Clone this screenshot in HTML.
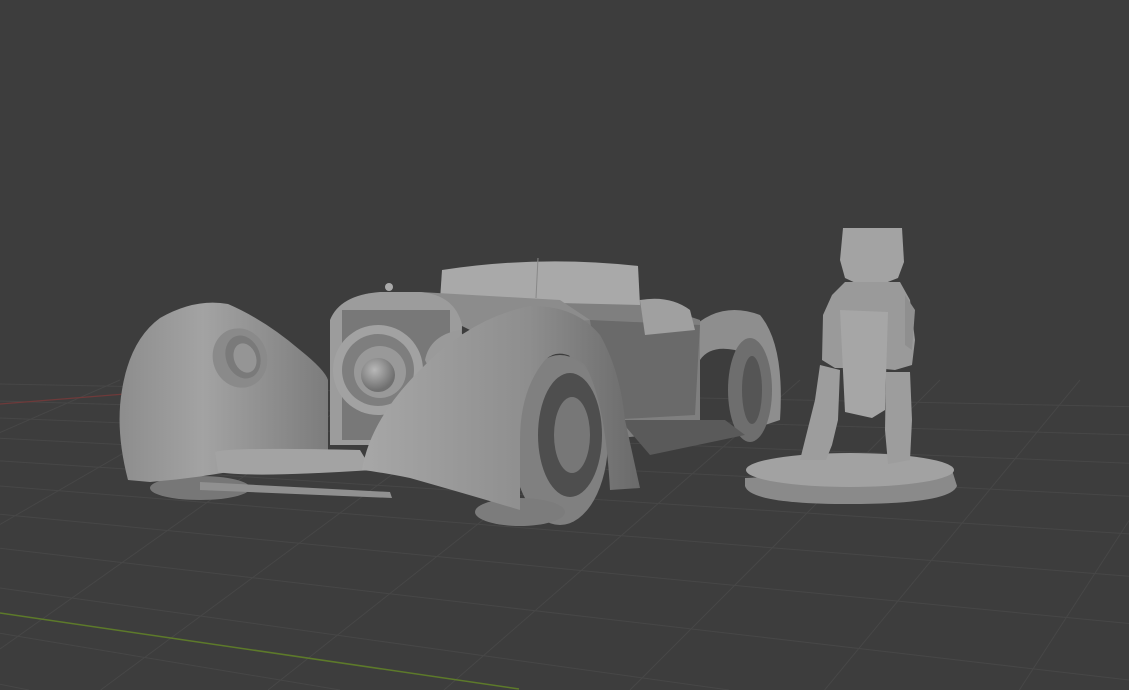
<!DOCTYPE html>
<html><head><meta charset="utf-8"><style>
html,body{margin:0;padding:0;background:#3d3d3d;overflow:hidden;width:1129px;height:690px}
svg{display:block}
</style></head><body>
<svg width="1129" height="690" viewBox="0 0 1129 690" xmlns="http://www.w3.org/2000/svg">
<defs>
<linearGradient id="fl" x1="0" y1="0" x2="1" y2="0"><stop offset="0" stop-color="#8d8d8d"/><stop offset="0.4" stop-color="#a3a3a3"/><stop offset="1" stop-color="#7c7c7c"/></linearGradient>
<linearGradient id="fr" x1="0" y1="0" x2="1" y2="0"><stop offset="0" stop-color="#a7a7a7"/><stop offset="0.6" stop-color="#8e8e8e"/><stop offset="1" stop-color="#6a6a6a"/></linearGradient>
<radialGradient id="hl" cx="0.4" cy="0.35" r="0.6"><stop offset="0" stop-color="#b8b8b8"/><stop offset="1" stop-color="#707070"/></radialGradient>
</defs>
<rect width="1129" height="690" fill="#3d3d3d"/>
<g stroke="#474747" stroke-width="1" fill="none">
<line x1="0" y1="384" x2="1129" y2="406.6"/>
<line x1="0" y1="401" x2="1129" y2="434.9"/>
<line x1="0" y1="418" x2="1129" y2="463.2"/>
<line x1="0" y1="438.3" x2="1129" y2="496.2"/>
<line x1="0" y1="460.9" x2="1129" y2="533.9"/>
<line x1="0" y1="486" x2="1129" y2="576.3"/>
<line x1="0" y1="514.3" x2="1129" y2="623.5"/>
<line x1="0" y1="548.3" x2="1129" y2="680"/>
<line x1="0" y1="588" x2="729" y2="690"/>
<line x1="0" y1="633.3" x2="340" y2="690"/>
<line x1="0" y1="684.3" x2="28.8" y2="690"/>
<line x1="120" y1="380" x2="0" y2="432.5"/>
<line x1="250" y1="380" x2="0" y2="524.4"/>
<line x1="380" y1="380" x2="0" y2="649"/>
<line x1="520" y1="380" x2="100.6" y2="690"/>
<line x1="660" y1="380" x2="268" y2="690"/>
<line x1="800" y1="380" x2="444" y2="690"/>
<line x1="940" y1="380" x2="630" y2="690"/>
<line x1="1080" y1="380" x2="824.6" y2="690"/>
<line x1="1129" y1="520.6" x2="1019.4" y2="690"/>
</g>
<line x1="0" y1="404" x2="125" y2="394" stroke="#6e3a3a" stroke-width="1.2"/>
<line x1="0" y1="613" x2="519" y2="689" stroke="#5d7a2a" stroke-width="1.5"/>

<path d="M690 330 Q720 300 760 315 Q785 345 780 420 L765 425 Q760 365 735 350 Q710 345 700 360 Z" fill="#8e8e8e"/>
<ellipse cx="750" cy="390" rx="22" ry="52" fill="#6e6e6e"/>
<ellipse cx="752" cy="390" rx="10" ry="34" fill="#555"/>
<path d="M440 300 L640 300 L700 320 L700 430 L600 440 L560 330 Z" fill="#7f7f7f"/>
<path d="M590 320 L700 325 L695 415 L605 420 Z" fill="#6a6a6a"/>
<path d="M640 300 Q670 295 690 310 L695 330 L645 335 Z" fill="#a0a0a0"/>
<path d="M620 420 L725 420 L745 435 L650 455 Z" fill="#5a5a5a"/>
<path d="M442 270 Q540 255 638 266 L640 305 L440 300 Z" fill="#a9a9a9"/>
<line x1="538" y1="258" x2="536" y2="298" stroke="#888"/>
<path d="M420 292 L560 300 L590 320 L470 330 L430 310 Z" fill="#8c8c8c"/>
<path d="M330 320 Q340 295 380 292 L420 292 Q455 295 462 325 L460 445 L330 445 Z" fill="#9c9c9c"/>
<rect x="342" y="310" width="108" height="130" fill="#787878"/>
<circle cx="378" cy="370" r="45" fill="#a2a2a2"/>
<circle cx="378" cy="370" r="36" fill="#7e7e7e"/>
<circle cx="380" cy="372" r="26" fill="#999"/>
<circle cx="378" cy="375" r="17" fill="url(#hl)"/>
<circle cx="389" cy="287" r="4" fill="#aaa"/>
<path d="M425 360 Q430 335 460 330 L468 345 Q445 360 440 390 Z" fill="#9a9a9a"/>
<ellipse cx="200" cy="488" rx="50" ry="12" fill="#777"/>
<path d="M128 480 Q115 430 122 390 Q130 340 160 318 Q195 298 228 304 Q265 320 300 350 Q325 370 328 380 L328 450 L250 468 Q200 478 150 482 Z" fill="url(#fl)"/>
<ellipse cx="240" cy="358" rx="27" ry="30" fill="#8a8a8a" transform="rotate(-20 240 358)"/>
<ellipse cx="243" cy="357" rx="17" ry="22" fill="#7a7a7a" transform="rotate(-20 243 357)"/>
<ellipse cx="245" cy="358" rx="11" ry="15" fill="#959595" transform="rotate(-20 245 358)"/>
<path d="M215 452 Q230 447 360 450 L372 470 Q250 478 218 472 Z" fill="#a3a3a3"/>
<path d="M200 482 L390 492 L392 498 L200 490 Z" fill="#909090"/>
<ellipse cx="560" cy="440" rx="48" ry="85" fill="#808080"/>
<ellipse cx="570" cy="435" rx="32" ry="62" fill="#4e4e4e"/>
<ellipse cx="572" cy="435" rx="18" ry="38" fill="#777"/>
<ellipse cx="520" cy="512" rx="45" ry="14" fill="#7c7c7c"/>
<path d="M362 470 Q370 420 420 370 Q470 318 530 306 Q575 305 600 335 Q620 370 625 420 L640 488 L610 490 Q605 400 585 365 Q560 345 545 360 Q520 390 520 440 L520 510 Q470 495 410 478 Q380 472 362 470 Z" fill="url(#fr)"/>
<path d="M745 478 L745 486 Q750 504 850 504 Q950 504 957 486 L952 470 Z" fill="#8a8a8a"/>
<ellipse cx="850" cy="470" rx="104" ry="17" fill="#a2a2a2"/>
<path d="M843 228 L902 228 L904 262 L898 278 L880 285 L860 285 L845 278 L840 260 Z" fill="#a3a3a3"/>
<path d="M845 282 L900 282 L910 300 L915 340 L912 365 L895 370 L875 368 L855 368 L835 368 L822 360 L823 315 L832 295 Z" fill="#9a9a9a"/>
<path d="M840 310 L888 312 L885 410 L872 418 L845 412 Z" fill="#a6a6a6"/>
<path d="M820 365 L840 370 L838 420 L832 445 L826 460 L800 460 L805 440 L815 400 Z" fill="#9d9d9d"/>
<path d="M886 372 L910 372 L912 420 L910 460 L888 464 L885 430 Z" fill="#9d9d9d"/>
<path d="M905 295 L915 310 L912 350 L905 345 Z" fill="#8f8f8f"/>
</svg>
</body></html>
